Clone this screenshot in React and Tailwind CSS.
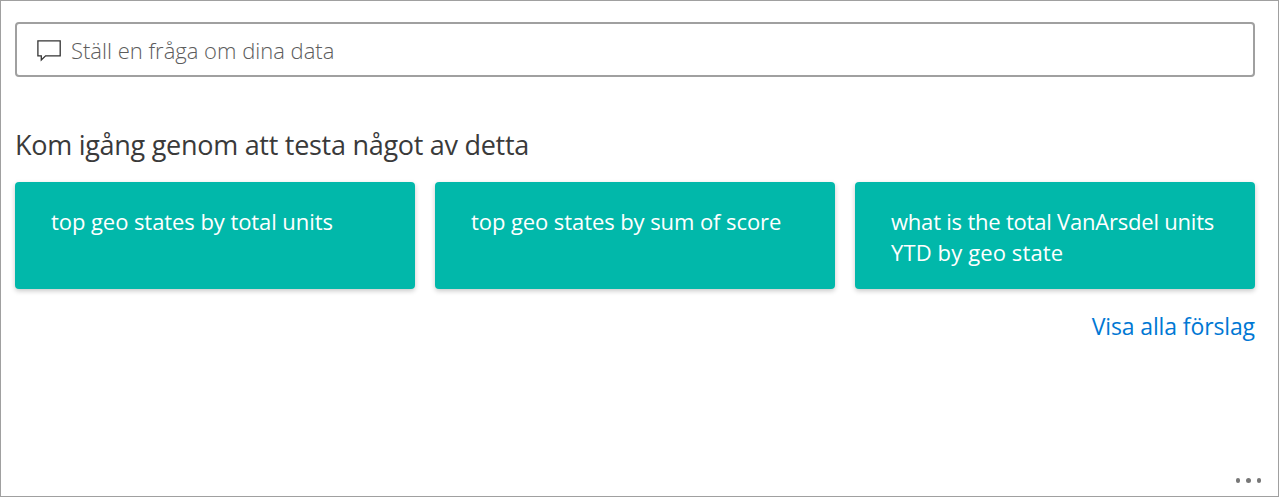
import React from "react";

const suggestions = [
  [{ text: "top geo states by total units", tracking: "tracking-[-0.07px]" }],
  [{ text: "top geo states by sum of score", tracking: "tracking-[-0.08px]" }],
  [
    { text: "what is the total VanArsdel units", tracking: "tracking-[-0.21px]" },
    { text: "YTD by geo state", tracking: "tracking-[0.12px]" },
  ],
];

function ChatIcon() {
  return (
    <svg className="h-6 w-6 shrink-0" viewBox="0 0 24 24" fill="none" stroke="#333333" strokeWidth="1.3">
      <path d="M0.9 2.8H23.2V17.8H8.6L4.3 22V17.8H0.9Z" />
    </svg>
  );
}

export default function App() {
  return (
    <main className="flex h-[497px] w-[1279px] flex-col overflow-hidden border border-[#a0a0a0] bg-white pt-[21px] pr-[23px] pl-[14px] font-['Open_Sans','Noto_Sans',sans-serif]">
      <div className="flex h-[55px] shrink-0 items-center rounded-[4px] border-2 border-[#a0a0a0] pl-5">
        <ChatIcon />
        <span className="ml-[10px] text-[22px] leading-[30px] font-light whitespace-nowrap text-[#5c5c5c]">
          Ställ en fråga om dina data
        </span>
      </div>
      <h1 className="mt-[50px] h-[36px] shrink-0 text-[27px] leading-[35px] font-normal tracking-[-0.28px] whitespace-nowrap text-[#3a3a3a]">
        Kom igång genom att testa något av detta
      </h1>
      <div className="mt-[19px] grid h-[107px] shrink-0 grid-cols-3 gap-5">
        {suggestions.map((lines) => (
          <button
            key={lines[0].text}
            className="flex flex-col items-start rounded-[4px] bg-[#01b8aa] pt-6 pl-9 text-left text-[22px] leading-[31px] whitespace-nowrap text-white shadow-[0_2px_5px_rgba(0,0,0,0.22)]"
          >
            {lines.map((line) => (
              <span key={line.text} className={line.tracking}>
                {line.text}
              </span>
            ))}
          </button>
        ))}
      </div>
      <a className="mt-5 self-end text-[23px] leading-[34px] tracking-[-0.12px] whitespace-nowrap text-[#0078d4]">
        Visa alla förslag
      </a>
      <div className="mt-auto mr-[-6px] mb-[13.5px] flex gap-[6px] self-end">
        <span className="size-[4.5px] rounded-full bg-[#777777]" />
        <span className="size-[4.5px] rounded-full bg-[#777777]" />
        <span className="size-[4.5px] rounded-full bg-[#777777]" />
      </div>
    </main>
  );
}
